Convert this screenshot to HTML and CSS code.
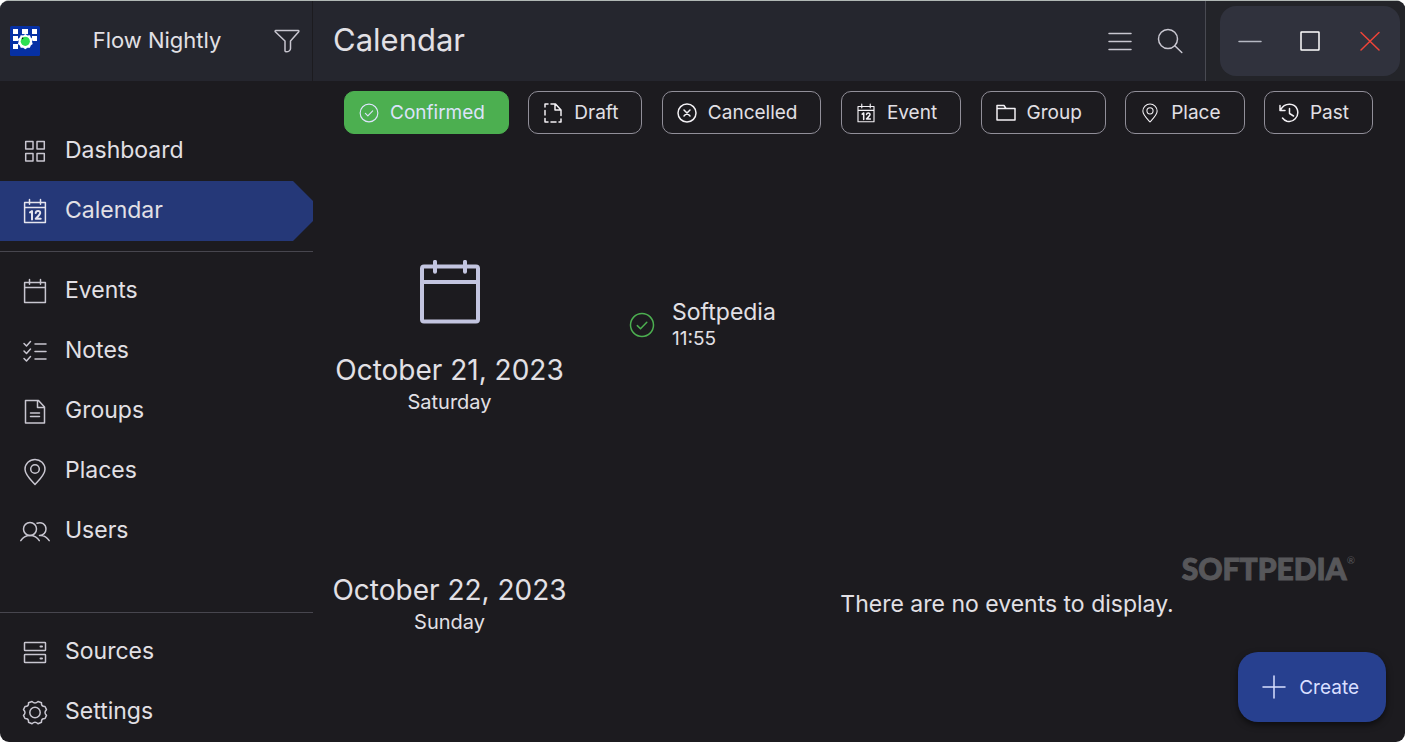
FILE: index.html
```html
<!DOCTYPE html>
<html lang="en">
<head>
<meta charset="utf-8">
<title>Flow Nightly</title>
<link rel="stylesheet" href="styles.css">
</head>
<body>
<svg class="defs" aria-hidden="true">
  <symbol id="cal" viewBox="0 0 24 26"><path d="M1.6 4.6h20.8v19.8H1.6zM1.6 9.6h20.8M6.5 1.5v4.8M17.5 1.5v4.8"/></symbol>
  <symbol id="cal12" viewBox="0 0 24 26"><path d="M1.6 4.6h20.8v19.8H1.6zM1.6 9.6h20.8M6.5 1.5v4.8M17.5 1.5v4.8"/><path d="M7 14.4l2-1.4v8.4M12.7 15c.3-2.8 4.8-2.6 4.5.2-.2 1.8-3 3.600-4.500 5.600h5" stroke-width="2"/></symbol>
  <symbol id="check" viewBox="0 0 26 26"><circle cx="13" cy="13" r="11.500"/><path d="M8.300 13.600l3.200 3.200 6.300-6.600"/></symbol>
  <symbol id="pin" viewBox="0 0 24 28"><path d="M12 26.500C7 21 2 16.500 2 11.200a10 9.800 0 0 1 20 0C22 16.500 17 21 12 26.500z"/><circle cx="12" cy="11" r="4.300"/></symbol>
</svg>
<div class="app">
  <header class="topbar">
    <div class="brand">
      <svg class="logo" viewBox="0 0 30 30" role="img" aria-label="Flow logo">
        <rect width="30" height="30" rx="1.500" fill="#0630a4"/>
        <path fill="#fff" d="M3 3h5v5H3zM12 3h6v5h-6zM22 3h5v5h-5zM3 10h5v5H3zM22 10h5v5h-5zM3 18h5v5H3z"/>
        <circle cx="15.300" cy="15.300" r="7.400" fill="#174ac4"/>
        <path fill="#fff" d="M15.300 8l2 1.400 2.600-.2.800 2.400 2 1.500-.8 2.400.8 2.500-2 1.500-.8 2.300h-2.500l-2.100 1.500-2.100-1.500h-2.500l-.8-2.300-2-1.500.8-2.500-.8-2.400 2-1.500.8-2.400 2.600.2z"/>
        <circle cx="15.300" cy="15.300" r="4.600" fill="#2ee052"/><circle cx="12.600" cy="12.400" r=".8" fill="#111"/>
      </svg>
      <span class="brand-name">Flow Nightly</span>
      <button class="icon-button" aria-label="Filter"><svg class="icon filter" viewBox="0 0 26 24"><path d="M1.800 1.500h22.400c.8 0 .8.700.5 1.200L16.500 12v7.500c0 1.500-1.500 3.300-4.500 3.300-.8 0-1-.4-1-1V12L1.300 2.700c-.4-.5-.2-1.200.5-1.200z"/></svg></button>
    </div>
    <div class="page-head">
      <h1>Calendar</h1>
      <div class="actions">
        <button class="icon-button" aria-label="List view"><svg class="icon w24" viewBox="0 0 24 24"><path d="M1 4.500h22M1 12.500h22M1 20.500h22"/></svg></button>
        <button class="icon-button" aria-label="Search"><svg class="icon w26" viewBox="0 0 26 26"><circle cx="11" cy="11" r="9.500"/><path d="M17.800 17.800l7 6.700"/></svg></button>
      </div>
    </div>
    <div class="window-area">
      <div class="window-controls">
        <button aria-label="Minimize"><svg class="icon w24" viewBox="0 0 24 24"><path d="M1 12.500h22"/></svg></button>
        <button aria-label="Maximize" class="maximize"><svg class="icon w24" viewBox="0 0 24 24"><rect x="3" y="3" width="18" height="18" rx=".5"/></svg></button>
        <button aria-label="Close" class="close"><svg class="icon w24" viewBox="0 0 24 24"><path d="M3 3.500l18 17.500M21 3.500L3 21"/></svg></button>
      </div>
    </div>
  </header>
  <div class="body">
    <nav class="sidebar" aria-label="Main">
      <a href="#dashboard"><svg class="icon" viewBox="0 0 30 30"><path d="M5.700 5.500h7.300v7.500H5.700zM17 5.500h7.300v7.500H17zM5.700 17.500h7.300v7.500H5.700zM17 17.500h7.300v7.500H17z"/></svg><span>Dashboard</span></a>
      <a href="#calendar" class="active" aria-current="page"><svg class="icon"><use href="#cal12" x="3" y="2" width="24" height="26"/></svg><span>Calendar</span></a>
      <hr>
      <a href="#events"><svg class="icon"><use href="#cal" x="3" y="2" width="24" height="26"/></svg><span>Events</span></a>
      <a href="#notes"><svg class="icon" viewBox="0 0 30 30"><path d="M15 8h11M15 15.500h11M15 23h11M4 7.500l2.500 2.500 4-4.500M4 15l2.500 2.500 4-4.500M4 22.500l2.500 2.500 4-4.500"/></svg><span>Notes</span></a>
      <a href="#groups"><svg class="icon" viewBox="0 0 30 30"><path d="M5.500 4.500h13l6 6.500v16h-19zM17.500 4.500V11.500h6.800M10.500 17h9M10.500 20.500h9"/></svg><span>Groups</span></a>
      <a href="#places"><svg class="icon"><use href="#pin" x="3" y="2" width="24" height="28"/></svg><span>Places</span></a>
      <a href="#users"><svg class="icon" viewBox="0 0 30 30"><circle cx="10" cy="13" r="6.500"/><path d="M.8 24.700c4-7 14.500-7 18.500 0M17 7.300c4.500-2 9 1 9 5.700 0 3.500-2.500 6.500-6.500 6.500 4.500-.5 7.500 1.700 9.700 5.200"/></svg><span>Users</span></a>
      <hr class="push">
      <a href="#sources"><svg class="icon" viewBox="0 0 30 30"><rect x="4.500" y="5.500" width="21" height="8" rx=".6"/><rect x="4.500" y="17.500" width="21" height="8" rx=".6"/><path d="M20.500 9.500h1.500M20.500 21.500h1.500" stroke-width="2"/></svg><span>Sources</span></a>
      <a href="#settings"><svg class="icon" viewBox="0 0 30 30"><circle cx="15" cy="15.500" r="5.200"/><path d="M12 4.500Q15 7.500 18 4.500L21.500 5.800Q21 9.600 25 9.500L26.500 12.600Q23.500 15.500 26.500 18.400L25 21.500Q21 21.400 21.500 25.200L18 26.700Q15 23.700 12 26.700L8.500 25.200Q9 21.400 5 21.500L3.500 18.400Q6.500 15.500 3.500 12.600L5 9.500Q9 9.600 8.500 5.800z"/></svg><span>Settings</span></a>
    </nav>
    <main>
      <div class="chips" role="group" aria-label="Filters">
        <button class="chip selected" aria-pressed="true"><svg class="icon"><use href="#check" width="20" height="20"/></svg>Confirmed</button>
        <button class="chip"><svg class="icon" viewBox="0 0 20 20"><path d="M5 1H2v3M2 7.500v4.500M2 15.500V19h3M8 19h5M16 19h2v-3M18 12.500V7L12.500 1H8M12 1.500V7h5.500"/></svg>Draft</button>
        <button class="chip"><svg class="icon" viewBox="0 0 20 20"><circle cx="10" cy="10" r="9"/><path d="M7 7l6 6M13 7l-6 6"/></svg>Cancelled</button>
        <button class="chip"><svg class="icon"><use href="#cal12" width="20" height="20"/></svg>Event</button>
        <button class="chip"><svg class="icon" viewBox="0 0 20 20"><path d="M1 17V2.500h7l2 3h9V17zM1 5.500h9"/></svg>Group</button>
        <button class="chip"><svg class="icon"><use href="#pin" width="20" height="20"/></svg>Place</button>
        <button class="chip"><svg class="icon" viewBox="0 0 20 20"><path d="M1 2.500v5h5M1.500 7C5.500-1 16-.3 18.300 6.500 20.500 14 14 20 8 18.200 6 17.500 4.600 16.500 3.500 15M10.500 5.500v5l4 2.500"/></svg>Past</button>
      </div>
      <section class="day first">
        <div class="date">
          <svg class="icon big" viewBox="0 0 60 64"><rect x="2" y="6.500" width="56" height="55" rx="2"/><path d="M2 22h56M15 1.800v10M45 1.800v10"/></svg>
          <h2>October 21, 2023</h2>
          <p>Saturday</p>
        </div>
        <div class="event">
          <svg class="icon w26 ok"><use href="#check"/></svg>
          <div><h3>Softpedia</h3><time>11:55</time></div>
        </div>
      </section>
      <section class="day">
        <div class="date">
          <h2>October 22, 2023</h2>
          <p>Sunday</p>
        </div>
        <p class="empty">There are no events to display.</p>
      </section>
    </main>
  </div>
  <div class="watermark">SOFTPEDIA<sup>®</sup></div>
  <button class="create"><svg class="icon w24" viewBox="0 0 24 24"><path d="M12 1v22M1 12h22"/></svg>Create</button>
</div>
</body>
</html>
```
FILE: styles.css
```css
* { box-sizing: border-box; }
html { background: #fff; }
body {
  margin: 0;
  font-family: Inter, "Liberation Sans", sans-serif;
  color: #e2e0e5;
}
h1, h2, h3, p { margin: 0; font-weight: 400; }
button {
  padding: 0;
  border: 0;
  background: none;
  color: inherit;
  font: inherit;
}
.defs { display: none; }
.app {
  position: relative;
  display: flex;
  flex-direction: column;
  min-height: 100vh;
  overflow: hidden;
  border-top: 1px solid #b1b8b5;
  border-radius: 9px;
  background: #1c1b1f;
}
.icon {
  display: block;
  flex: none;
  fill: none;
  stroke: currentColor;
  stroke-width: 1.5;
  stroke-linecap: round;
  stroke-linejoin: round;
}
.w24 { width: 24px; height: 24px; }
.w26 { width: 26px; height: 26px; }

.topbar { display: flex; height: 80px; background: #25262e; }
.brand {
  display: flex;
  align-items: center;
  width: 313px;
  padding: 0 12px 0 10px;
  border-right: 1px solid #1c1b1f;
}
.logo { width: 30px; height: 30px; }
.brand-name {
  flex: 1;
  padding-bottom: 3px;
  text-align: center;
  font-size: 22px;
}
.icon-button { color: #c8c6d0; }
.filter { width: 26px; height: 24px; }
.page-head {
  flex: 1;
  display: flex;
  align-items: center;
  justify-content: space-between;
  padding: 0 22px 0 20px;
}
h1 { padding-bottom: 2px; font-size: 31px; line-height: 36px; }
.actions { display: flex; align-items: center; gap: 25px; }
.window-area {
  display: flex;
  padding: 5px 5px 5px 14px;
  border-left: 1px solid #494a52;
  background: #232429;
}
.window-controls { display: flex; border-radius: 16px; background: #30323d; }
.window-controls button {
  display: grid;
  place-items: center;
  width: 60px;
  color: #b5b8c3;
}
.window-controls .maximize { color: #fff; }
.window-controls .close { color: #ee4438; }

.body { flex: 1; display: flex; }
.sidebar {
  display: flex;
  flex-direction: column;
  width: 313px;
  padding-top: 40px;
}
.sidebar a {
  display: flex;
  align-items: center;
  gap: 15px;
  height: 60px;
  padding-left: 20px;
  color: inherit;
  font-size: 23px;
  text-decoration: none;
}
.sidebar span { padding-bottom: 2px; }
.sidebar .icon { width: 30px; height: 30px; color: #c8c6d0; }
.sidebar .active {
  background: #253878;
  clip-path: polygon(0 0, calc(100% - 20px) 0, 100% 20px, 100% 40px, calc(100% - 20px) 100%, 0 100%);
}
.sidebar .active .icon { color: #e6e5ee; }
hr {
  width: 100%;
  margin: 10px 0 9px;
  border: 0;
  border-top: 1px solid #47464e;
}
hr.push { margin-top: auto; }

main { flex: 1; min-width: 0; }
.chips {
  display: flex;
  justify-content: space-between;
  padding: 10px 32px 0 31px;
}
.chip {
  display: flex;
  align-items: center;
  gap: 11px;
  height: 43px;
  padding: 0 23px 0 14px;
  border: 1px solid #918f99;
  border-radius: 10px;
  font-size: 19px;
}
.chip .icon { width: 20px; height: 20px; color: #f3f1f5; }
.chip.selected {
  border-color: #4caf50;
  background: #4caf50;
  color: #dce3fb;
}
.chip.selected .icon { color: #dce3fb; }
.day {
  display: grid;
  grid-template-columns: 233px 1fr;
  column-gap: 63px;
  align-items: center;
  height: 220px;
  margin-top: 22px;
  padding: 0 20px;
}
.day.first { height: 268px; margin-top: 70px; }
.date {
  display: flex;
  flex-direction: column;
  align-items: center;
  white-space: nowrap;
}
.big {
  width: 60px;
  height: 64px;
  margin-bottom: 28px;
  color: #c3c5e0;
  stroke-width: 4;
}
h2 { font-size: 28px; line-height: 36px; }
.date p { font-size: 20px; line-height: 28px; }
.event { display: flex; align-items: center; gap: 17px; padding-bottom: 26px; }
.ok { color: #4caf50; }
h3 { font-size: 23px; line-height: 28px; }
time { display: block; font-size: 19px; line-height: 26px; }
.empty { text-align: center; font-size: 23px; line-height: 28px; }

.watermark {
  position: absolute;
  right: 50px;
  bottom: 156px;
  color: #57575a;
  font: 900 30px/36px Lato, sans-serif;
  -webkit-text-stroke: 1px #57575a;
}
.watermark sup {
  font: 10px/10px Lato, sans-serif;
  vertical-align: 16px;
  -webkit-text-stroke: 0;
}
.create {
  position: absolute;
  right: 19px;
  bottom: 20px;
  display: flex;
  align-items: center;
  gap: 13px;
  height: 70px;
  padding: 0 27px 0 24px;
  border-radius: 20px;
  background: #27408f;
  color: #d9dfff;
  font-size: 19px;
  box-shadow: 0 3px 6px #0008;
}
```
